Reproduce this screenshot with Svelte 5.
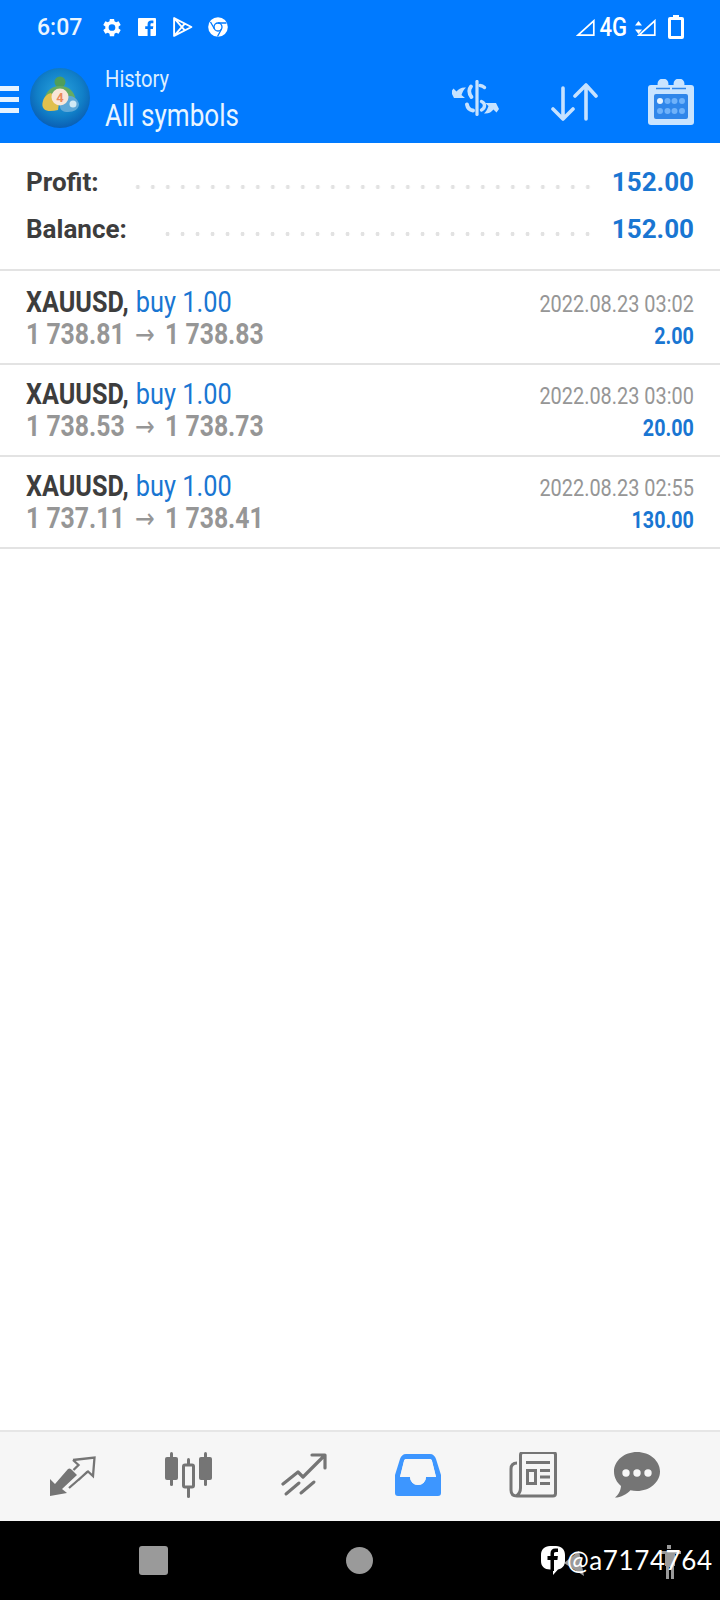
<script>
	const summary = [
		{ label: 'Profit:', value: '152.00' },
		{ label: 'Balance:', value: '152.00' }
	];
	const deals = [
		{ from: '1 738.81', to: '1 738.83', date: '2022.08.23 03:02', profit: '2.00' },
		{ from: '1 738.53', to: '1 738.73', date: '2022.08.23 03:00', profit: '20.00' },
		{ from: '1 737.11', to: '1 738.41', date: '2022.08.23 02:55', profit: '130.00' }
	];
</script>

<div class="page">
	<header>
		<div class="status">
			<span class="time">6:07</span>
			<svg class="st" width="23" height="23" viewBox="0 0 24 24"><path fill="#fff" fill-rule="evenodd" d="M19.4 13a7.6 7.6 0 0 0 0-2l2.2-1.7-2.2-3.7-2.6 1a7.5 7.5 0 0 0-1.7-1L14.7 3h-4.4l-.4 2.6a7.5 7.5 0 0 0-1.7 1l-2.6-1-2.2 3.7L5.600 11a7.600 7.600 0 0 0 0 2l-2.200 1.700 2.200 3.700 2.600-1a7.500 7.500 0 0 0 1.700 1l.4 2.600h4.400l.4-2.600a7.500 7.500 0 0 0 1.700-1l2.600 1 2.200-3.700zM12.500 15.500a3.500 3.500 0 1 1 0-7 3.500 3.500 0 0 1 0 7z"/></svg>
			<svg class="st fb" width="18" height="18" viewBox="0 0 18 18"><path fill="#fff" d="M1 0h16a1 1 0 0 1 1 1v16a1 1 0 0 1-1 1h-4.500v-7h2.400l.4-2.800h-2.800V6.500c0-.8.300-1.300 1.400-1.300h1.500V2.700c-.3 0-1.200-.1-2.200-.1-2.200 0-3.600 1.300-3.600 3.700v1.900H7.200V11h2.400v7H1a1 1 0 0 1-1-1V1a1 1 0 0 1 1-1z"/></svg>
			<svg class="st play" width="21" height="22" viewBox="0 0 20 20" fill="none" stroke="#fff" stroke-width="1.800" stroke-linejoin="round"><path d="M2 1.500v17L18.500 10zM2 1.500l10 11.500M2 18.500L12 7"/></svg>
			<svg class="st" width="20" height="20" viewBox="0 0 20 20"><circle cx="10" cy="10" r="9.800" fill="#fff"/><circle cx="10" cy="10" r="4" fill="none" stroke="#007aff" stroke-width="1.300"/><path d="M10 6h8.500M6.500 12l-4-7M13.500 12L9.500 19.500" stroke="#007aff" stroke-width="1.300" fill="none"/></svg>
			<span class="spacer"></span>
			<svg width="19" height="17" viewBox="0 0 19 17" fill="none" stroke="#fff" stroke-width="1.700"><path d="M17.800 1.800v14.400H2z"/></svg>
			<span class="net">4G</span>
			<svg class="updown" width="7" height="13" viewBox="0 0 7 13" fill="#fff"><path d="M3.500 0L7 4.500H0zM3.500 13L0 8.500h7z"/></svg>
			<svg width="19" height="17" viewBox="0 0 19 17" fill="none" stroke="#fff" stroke-width="1.700"><path d="M17.800 1.800v14.400H2z"/></svg>
			<svg class="batt" width="16" height="24" viewBox="0 0 16 24"><path fill="#fff" fill-rule="evenodd" d="M5 0h6v2h3a2 2 0 0 1 2 2v18a2 2 0 0 1-2 2H2a2 2 0 0 1-2-2V4a2 2 0 0 1 2-2h3zM3 5v16h10V5z"/></svg>
		</div>
		<div class="toolbar">
			<div class="burger"><i></i><i></i><i></i></div>
			<svg class="logo" width="60" height="60" viewBox="0 0 60 60">
				<defs>
					<radialGradient id="lg" cx="50%" cy="42%" r="58%">
						<stop offset="0" stop-color="#2aa4de"/>
						<stop offset="0.65" stop-color="#1180c8"/>
						<stop offset="1" stop-color="#0a5fb4"/>
					</radialGradient>
				</defs>
				<circle cx="30" cy="30" r="30" fill="url(#lg)"/>
				<circle cx="30" cy="14" r="5.500" fill="#4f9e5a"/>
				<path d="M14 36c0-11 6-18 16-18s16 7 16 18z" fill="#66ab62"/>
				<path d="M13 33c1-4 4-7 8-8l8 10-1 7c-5 1-11 2-14-1-2-2-2-5-1-8z" fill="#e0c04e"/>
				<path d="M33 29c7-3 14 0 16 7 0 5-5 8-11 8-5 0-8-2-8-6z" fill="#5ea8d8"/>
				<circle cx="43" cy="36" r="3.500" fill="#cfe9f5"/>
				<circle cx="30" cy="29" r="8.500" fill="#f9e6d8"/>
				<text x="30" y="34" text-anchor="middle" font-size="13" font-weight="700" fill="#ea8a5c">4</text>
			</svg>
			<div class="titles">
				<span class="sub cond">History</span>
				<span class="title cond">All symbols</span>
			</div>
			<span class="spacer"></span>
			<svg class="tool swap" width="50" height="40" viewBox="8 8 50 40" fill="none" stroke="#c6e2ff" stroke-linecap="round">
				<path d="M33 9.500v33" stroke-width="3.200"/>
				<path d="M40.500 15.500C39 14 37.500 13.500 36 13.500" stroke-width="3.400"/>
				<path d="M27 14.500C25 17 24.500 21 27.500 25" stroke-width="3.800"/>
				<path d="M23 32.500C23.500 35.500 25.500 38 29 38.500" stroke-width="4"/>
				<path d="M37.500 29.500C41.500 31 41.500 36 37.500 38" stroke-width="3.400"/>
				<path fill="#c6e2ff" stroke="none" d="M7 20l3 6 11 0-3.500-3C18.500 20 19.500 18 22 15.500 17.500 15 14.500 17 12.500 19.500L9.500 16.500z"/>
				<path fill="#c6e2ff" stroke="none" transform="rotate(180 31 28.500)" d="M7 20l3 6 11 0-3.500-3C18.500 20 19.500 18 22 15.500 17.500 15 14.500 17 12.500 19.500L9.500 16.500z"/>
			</svg>
			<svg class="tool arrows" width="47" height="39" viewBox="0 0 47 39" fill="none" stroke="#c6e2ff" stroke-width="3.600" stroke-linecap="round" stroke-linejoin="round">
				<path d="M12 5v31M2 26l10 10 10-10M35 2v34M24 13L35 2l10 11"/>
			</svg>
			<svg class="tool cal" width="46" height="46" viewBox="0 0 46 46">
				<rect x="0" y="6" width="46" height="40" rx="3" fill="#c9e4ff"/>
				<circle cx="15" cy="5" r="5.500" fill="#c9e4ff"/>
				<circle cx="31" cy="5" r="5.500" fill="#c9e4ff"/>
				<path d="M8 9.500h14M24 9.500h14" stroke="#2f86ea" stroke-width="1.500" fill="none"/>
				<rect x="6" y="15" width="34" height="25" rx="2" fill="#2f86ea"/>
				<g fill="#6fb2fa">
					<circle cx="12" cy="22" r="3" fill="#e8f4ff"/><circle cx="19.500" cy="22" r="3"/><circle cx="26.500" cy="22" r="3"/><circle cx="34" cy="22" r="3"/>
					<circle cx="12" cy="32" r="3"/><circle cx="19.500" cy="32" r="3"/><circle cx="26.500" cy="32" r="3"/><circle cx="34" cy="32" r="3"/>
				</g>
			</svg>
		</div>
	</header>

	<section class="summary">
		{#each summary as row}
			<div class="sum-row">
				<span class="sum-label">{row.label}</span>
				<span class="leader"></span>
				<span class="sum-value">{row.value}</span>
			</div>
		{/each}
	</section>

	<ul class="deals">
		{#each deals as deal}
			<li>
				<div class="left">
					<div class="line1 cond"><b>XAUUSD,</b> <span class="buy">buy 1.00</span></div>
					<div class="line2 cond">{deal.from} <span class="arrow">→</span> {deal.to}</div>
				</div>
				<div class="right">
					<div class="date cond-r">{deal.date}</div>
					<div class="profit cond-r">{deal.profit}</div>
				</div>
			</li>
		{/each}
	</ul>

	<div class="fill"></div>

	<nav>
		<svg width="48" height="44" viewBox="9 7 48 44">
			<path fill="#757575" d="M10 33l5 5 13-15q2-1.500 4 1l5 5-15 14 5 4-17 3z"/>
			<path fill="none" stroke="#757575" stroke-width="2.300" d="M33 14l21.500-2.500L53 30l-5-4.500L29 42M33 14l5.500 5-5 5M38.500 34l9-8.500"/>
		</svg>
		<svg width="48" height="46" viewBox="0 0 48 46" fill="#757575">
			<rect x="0" y="5" width="13" height="23" rx="2"/><rect x="5" y="0" width="3" height="34" rx="1.500"/>
			<rect x="34" y="5" width="13" height="23" rx="2"/><rect x="39" y="0" width="3" height="34" rx="1.500"/>
			<rect x="22" y="6" width="3" height="40" rx="1.500"/>
			<rect x="18.500" y="13" width="10" height="22" rx="1.500" fill="#f6f6f6" stroke="#757575" stroke-width="3"/>
		</svg>
		<svg width="46" height="44" viewBox="0 0 46 44" fill="none" stroke="#757575" stroke-width="3.200" stroke-linecap="round" stroke-linejoin="round">
			<path d="M2 31l15-12 5 5 21-21M31 2h13v13"/>
			<path d="M5 41l13-11M20 40l13-11" stroke-width="3"/>
		</svg>
		<svg width="46" height="42" viewBox="0 0 46 42">
			<path fill="#3d96ff" fill-rule="evenodd" d="M11 0h24c3 0 5 2 6 5l5 16v18a3 3 0 0 1-3 3H3a3 3 0 0 1-3-3V21L5 5c1-3 3-5 6-5zM11 5c-1 0-2 1-2 2L5 23h10a8 8 0 0 0 16 0h10L37 7c0-1-1-2-2-2z"/>
			<path fill="#f6f6f6" d="M11 5h24c1 0 2 1 2 2l4 16H31a8 8 0 0 1-16 0H5L9 7c0-1 1-2 2-2z"/>
		</svg>
		<svg width="48" height="46" viewBox="0 0 48 46">
			<path fill="none" stroke="#757575" stroke-width="3" d="M8 11c-4 0-6 2-6 6v21c0 4 2 6 6 6h36c1.500 0 2.500-1 2.500-2.500v-39c0-1-1-2-2.500-2H14c-1.500 0-2.500 1-2.500 2.500v33c0 4-1.500 6-4 8"/>
			<g fill="#757575">
				<rect x="17" y="9" width="24" height="3"/>
				<path fill-rule="evenodd" d="M17 17h11v16H17zM20 20v10h5V20z"/>
				<rect x="31" y="17" width="10" height="3"/><rect x="31" y="23.500" width="10" height="3"/><rect x="31" y="30" width="10" height="3"/>
			</g>
		</svg>
		<svg class="chat" width="46" height="46" viewBox="0 0 46 46">
			<path fill="#757575" d="M23 0c12.700 0 23 8.800 23 19.500S35.700 39 23 39c-2.300 0-4.500-.3-6.600-.8C13 42 7 45.500 1 45.500c3-2.500 5.500-6 6-11.500C2.800 30.500 0 25.300 0 19.500 0 8.800 10.300 0 23 0z"/>
			<circle cx="12" cy="21" r="3.700" fill="#f6f6f6"/><circle cx="23" cy="21" r="3.700" fill="#f6f6f6"/><circle cx="34" cy="21" r="3.700" fill="#f6f6f6"/>
		</svg>
	</nav>

	<footer>
		<span class="btn-square"></span>
		<span class="btn-circle"></span>
		<svg class="btn-back" width="22" height="28" viewBox="0 0 22 28"><path fill="#9a9a9a" d="M0 12L15 0l5 25z"/></svg>
		<svg class="btn-person" width="22" height="34" viewBox="0 0 22 34" fill="#9a9a9a"><path d="M8 0h4v4H8zM0 6h22v3h-6v12h-1v13h-3V22h-2v12H7V21H6V9H0z"/></svg>
		<div class="mark">
			<svg width="24" height="29" viewBox="0 0 24 29"><path fill="#fff" d="M9 0h6c5.500 0 9 3.500 9 9v6c0 4.500-2.500 7.500-7 8.500L12 29v-5.500H9c-5.500 0-9-3-9-8.500V9c0-5.500 3.500-9 9-9z"/><path fill="#000" d="M13 25v-11h3.400l.5-4H13V7.800c0-1.100.4-1.800 2-1.800h2V2.500c-.5 0-1.600-.1-2.800-.1-2.800 0-4.700 1.700-4.700 4.800V10H6.500v4h3v11z"/></svg>
			<span>@a7174764</span>
		</div>
	</footer>
</div>

<style>
	:global(body) {
		margin: 0;
	}

	.page {
		width: 720px;
		height: 1600px;
		display: flex;
		flex-direction: column;
		font-family: Roboto, 'Liberation Sans', sans-serif;
		background: #fff;
		overflow: hidden;
	}

	header {
		background: #007aff;
		height: 143px;
		flex: none;
		color: #fff;
	}

	.status {
		height: 54px;
		display: flex;
		align-items: center;
		padding: 0 36px 0 37px;
		box-sizing: border-box;
	}

	.time {
		font-size: 23px;
		font-weight: 500;
		width: 63px;
		color: #eaf5ff;
	}

	.st {
		margin-right: 15px;
	}

	.fb {
		margin-right: 16px;
	}

	.spacer {
		flex: 1;
	}

	.net {
		font-size: 26px;
		font-weight: 500;
		transform: scaleX(0.85);
		margin-left: 2px;
	}

	.updown {
		margin: 0 -5px 0 6px;
	}

	.batt {
		margin-left: 12px;
	}

	.toolbar {
		height: 89px;
		display: flex;
		align-items: center;
	}

	.burger {
		width: 19px;
		display: flex;
		flex-direction: column;
		gap: 6px;
		margin-top: 1px;
	}

	.burger i {
		display: block;
		height: 5px;
		background: #e6f3ff;
	}

	.logo {
		margin-left: 11px;
		flex: none;
		margin-bottom: 2px;
	}

	.titles {
		margin-left: 15px;
		display: flex;
		flex-direction: column;
		margin-top: 5px;
	}

	.cond {
		transform: scaleX(0.84);
		transform-origin: left center;
		white-space: nowrap;
	}

	.cond-r {
		transform: scaleX(0.84);
		transform-origin: right center;
		white-space: nowrap;
	}

	.sub {
		font-size: 24px;
		line-height: 30px;
		color: #dceeff;
	}

	.title {
		font-size: 31px;
		line-height: 44px;
		color: #e9f5ff;
	}

	.tool {
		flex: none;
	}

	.swap {
		margin-right: 49px;
		margin-top: 2px;
	}

	.arrows {
		margin-right: 50px;
		margin-top: 8px;
	}

	.cal {
		margin-right: 26px;
		margin-top: 7px;
	}

	.summary {
		flex: none;
		height: 128px;
		box-sizing: border-box;
		border-bottom: 2px solid #e3e3e3;
		padding: 15px 26px 0;
	}

	.sum-row {
		height: 47px;
		display: flex;
		align-items: center;
		font-size: 26px;
	}

	.sum-label {
		font-weight: 700;
		color: #3d3d3d;
	}

	.sum-value {
		font-weight: 700;
		color: #1976d2;
	}

	.leader {
		flex: 1;
		height: 4px;
		margin: 11px 17px 0 34px;
		background-image: radial-gradient(circle at center, #e2e2e2 1.800px, transparent 2.200px);
		background-size: 15px 4px;
		background-repeat: repeat-x;
		background-position: right;
	}

	.deals {
		list-style: none;
		margin: 0;
		padding: 2px 0 0;
		flex: none;
	}

	.deals li {
		height: 92px;
		box-sizing: border-box;
		border-bottom: 2px solid #e3e3e3;
		padding: 12px 26px 0;
		display: flex;
		justify-content: space-between;
	}

	.line1 {
		font-size: 30px;
		line-height: 34px;
		color: #3d3d3d;
	}

	.line1 b {
		font-weight: 700;
	}

	.buy {
		color: #1976d2;
		margin-left: 1px;
		font-size: 30.200px;
	}

	.line2 {
		font-size: 29.500px;
		line-height: 30px;
		font-weight: 700;
		color: #969696;
	}

	.arrow {
		font-size: 28px;
		font-weight: 400;
		font-family: 'DejaVu Sans', sans-serif;
		margin: 0 5px;
	}

	.right {
		text-align: right;
	}

	.date {
		font-size: 23.700px;
		line-height: 34px;
		color: #969696;
		margin-top: 2px;
	}

	.profit {
		font-size: 23.500px;
		line-height: 30px;
		font-weight: 700;
		color: #1976d2;
	}

	.fill {
		flex: 1;
	}

	nav {
		flex: none;
		height: 91px;
		box-sizing: border-box;
		background: #f6f6f6;
		border-top: 2px solid #e6e6e6;
		display: flex;
		align-items: center;
		padding: 0 0 4px 49px;
		gap: 68px;
	}

	.chat {
		margin-left: -11px;
	}

	footer {
		flex: none;
		height: 79px;
		background: #000;
		position: relative;
		display: flex;
		align-items: center;
		padding-left: 139px;
		gap: 178px;
	}

	.btn-square {
		width: 29px;
		height: 29px;
		border-radius: 3px;
		background: #9a9a9a;
	}

	.btn-circle {
		width: 27px;
		height: 27px;
		border-radius: 50%;
		background: #9a9a9a;
	}

	.btn-back {
		position: absolute;
		left: 564px;
		top: 30px;
	}

	.btn-person {
		position: absolute;
		left: 659px;
		top: 24px;
	}

	.mark {
		position: absolute;
		left: 541px;
		top: 23px;
		display: flex;
		align-items: center;
		gap: 2px;
		color: #fff;
		font-family: Lato, sans-serif;
		font-size: 26px;
		letter-spacing: 0.600px;
	}
</style>
